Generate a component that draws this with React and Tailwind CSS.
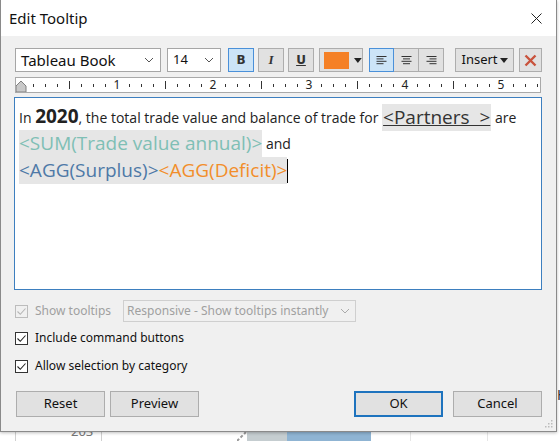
import React from "react";

const UI = { fontFamily: '"Noto Sans", "Open Sans", sans-serif' };
const TB = { fontFamily: '"Open Sans", "Noto Sans", sans-serif' };

function Chevron({ color = "#555" }) {
  return (
    <svg width="10" height="6" viewBox="0 0 10 6">
      <path d="M1 1 L5 5 L9 1" fill="none" stroke={color} strokeWidth="1" />
    </svg>
  );
}

function Check({ disabled }) {
  return (
    <div
      className={`w-[13px] h-[13px] border flex items-center justify-center ${
        disabled ? "border-[#bcbcbc] bg-[#f0f0f0]" : "border-[#333] bg-white"
      }`}
    >
      <svg width="11" height="11" viewBox="0 0 11 11">
        <path
          d="M1.5 5.5 L4.3 8.3 L9.5 2.5"
          fill="none"
          stroke={disabled ? "#b5b5b5" : "#222"}
          strokeWidth="1.1"
        />
      </svg>
    </div>
  );
}

function Ruler() {
  const ticks = [];
  const nums = [];
  for (let i = 1; i <= 43; i++) {
    const x = 5 + i * 12;
    if (i % 8 === 0) {
      nums.push(
        <span key={i} className="w-[24px] -ml-[12px] text-center" style={{ marginLeft: 0 }}>
          {i / 8}
        </span>
      );
      ticks.push(null);
    } else if (i % 4 === 0) {
      ticks.push(<line key={i} x1={x + 0.5} x2={x + 0.5} y1="3" y2="11" stroke="#333" strokeWidth="1" />);
    } else {
      ticks.push(<line key={i} x1={x + 0.5} x2={x + 0.5} y1="6" y2="9" stroke="#333" strokeWidth="1" />);
    }
  }
  return (
    <div className="ml-[1px] mt-[5px] w-[526px] h-[16px] bg-white border border-[#a9a9a9] flex">
      <svg width="524" height="14" viewBox="0 0 524 14" className="shrink-0">
        {ticks}
        <polygon points="5,3 10,8 10,14 0,14 0,8" fill="#c9c9c9" stroke="#808080" strokeWidth="1" />
      </svg>
      <div className="-ml-[524px] h-[14px] flex text-[12px] leading-[14px] text-[#222] pl-[89px] gap-[72px]">
        {nums}
      </div>
    </div>
  );
}

function TBtn({ children, selected, className = "" }) {
  return (
    <div
      className={`h-[24px] border flex items-center justify-center ${
        selected ? "bg-[#cce4f7] border-[#4a90d9]" : "bg-[#e1e1e1] border-[#adadad]"
      } ${className}`}
    >
      {children}
    </div>
  );
}

function AlignIcon({ kind }) {
  const rows = [10, 7, 10, 7];
  return (
    <svg width="11" height="9" viewBox="0 0 11 9">
      {rows.map((w, i) => {
        let x = 0.5;
        if (kind === "center") x = (11 - w) / 2;
        if (kind === "right") x = 11 - w - 0.5;
        return <line key={i} x1={x} x2={x + w} y1={i * 2.4 + 0.5} y2={i * 2.4 + 0.5} stroke="#333" strokeWidth="1" />;
      })}
    </svg>
  );
}

function Hl({ children, className = "" }) {
  return (
    <span className={`inline-block h-[27px] leading-[27px] bg-[#e6e6e6] text-[19px] align-bottom ${className}`}>
      {children}
    </span>
  );
}

function Btn({ children, primary, className = "" }) {
  return (
    <div
      className={`h-[26px] w-[89px] flex items-center justify-center text-[13px] text-[#111] bg-[#e1e1e1] ${
        primary ? "border-2 border-[#1e73be]" : "border border-[#adadad]"
      } ${className}`}
    >
      {children}
    </div>
  );
}

export default function App() {
  return (
    <div className="w-[560px] h-[441px] overflow-hidden bg-white flex flex-col" style={UI}>
      <div className="flex h-[432px]">
        <div className="relative z-10 w-[557px] h-[432px] flex flex-col border-l border-r border-b border-[#8a8a8a] shadow-[0_1px_3px_rgba(0,0,0,0.25)]">
          {/* Title bar */}
          <div className="h-[36px] bg-white flex items-center justify-between pl-[8px] pr-[14px]">
            <span className="text-[15px] text-[#111]">Edit Tooltip</span>
            <svg width="11" height="11" viewBox="0 0 11 11">
              <path d="M0.5 0.5 L10.5 10.5 M10.5 0.5 L0.5 10.5" stroke="#222" strokeWidth="1" />
            </svg>
          </div>
          {/* Body */}
          <div className="flex-1 bg-[#f0f0f0] pl-[13px] pt-[12px] flex flex-col">
            {/* Toolbar */}
            <div className="ml-[1px] h-[24px] flex items-center">
              <div className="w-[146px] h-[24px] bg-white border border-[#a6a6a6] flex items-center justify-between pl-[5px] pr-[6px]">
                <span className="text-[15px] text-[#111]">Tableau Book</span>
                <Chevron />
              </div>
              <div className="ml-[6px] w-[54px] h-[24px] bg-white border border-[#a6a6a6] flex items-center justify-between pl-[5px] pr-[6px]">
                <span className="text-[13px] text-[#111]">14</span>
                <Chevron />
              </div>
              <TBtn selected className="ml-[7px] w-[26px]">
                <span className="text-[12px] font-bold text-[#333]" style={{ fontFamily: '"DejaVu Sans", sans-serif' }}>B</span>
              </TBtn>
              <TBtn className="ml-[4px] w-[26px]">
                <span className="text-[13px] font-bold italic text-[#333]" style={{ fontFamily: '"Liberation Serif", serif' }}>I</span>
              </TBtn>
              <TBtn className="ml-[4px] w-[26px]">
                <span className="text-[12px] font-bold underline text-[#333]" style={{ fontFamily: '"DejaVu Sans", sans-serif' }}>U</span>
              </TBtn>
              <TBtn className="ml-[5px] w-[44px] justify-start pl-[4px]">
                <div className="w-[26px] h-[17px] bg-[#f58025]" />
                <svg width="8" height="5" viewBox="0 0 8 5" className="ml-[5px]">
                  <path d="M0 0 L8 0 L4 5 Z" fill="#222" />
                </svg>
              </TBtn>
              <div className="ml-[6px] flex">
                <TBtn selected className="w-[25px]"><AlignIcon kind="left" /></TBtn>
                <TBtn className="w-[25px] border-l-0"><AlignIcon kind="center" /></TBtn>
                <TBtn className="w-[25px] border-l-0"><AlignIcon kind="right" /></TBtn>
              </div>
              <TBtn className="ml-[11px] w-[59px]">
                <span className="text-[13px] text-[#111]">Insert</span>
                <svg width="8" height="5" viewBox="0 0 8 5" className="ml-[2px]">
                  <path d="M0 0 L8 0 L4 5 Z" fill="#222" />
                </svg>
              </TBtn>
              <TBtn className="ml-[5px] w-[23px]">
                <svg width="13" height="13" viewBox="0 0 13 13">
                  <path d="M1.5 1.5 L11.5 11.5 M11.5 1.5 L1.5 11.5" stroke="#c9533d" strokeWidth="2.4" />
                </svg>
              </TBtn>
            </div>
            <Ruler />
            {/* Text area */}
            <div className="mt-[4px] w-[528px] h-[193px] bg-white border border-[#3d7fbf] pl-[4px] pt-[5px] text-[14px] text-[#222] leading-[27px]" style={TB}>
              <div className="h-[27px] whitespace-nowrap">
                In <span className="text-[19px] font-bold">2020</span>, the total trade value and balance of trade for{" "}
                <Hl className="underline text-[#333] px-[1px]">{"<Partners\u00a0\u00a0>"}</Hl> are
              </div>
              <div className="h-[27px] whitespace-nowrap">
                <Hl className="text-[#7fbfb5]">{"<SUM(Trade value annual)>"}</Hl> and
              </div>
              <div className="h-[27px] whitespace-nowrap flex items-end">
                <Hl className="text-[#4e79a7]">{"<AGG(Surplus)>"}</Hl>
                <Hl className="text-[#f28e2b]">{"<AGG(Deficit)>"}</Hl>
                <span className="inline-block w-[1px] h-[24px] bg-black mb-[1px]" />
              </div>
            </div>
            {/* Show tooltips */}
            <div className="mt-[10px] ml-[1px] h-[22px] flex items-center">
              <Check disabled />
              <span className="ml-[7px] text-[12px] text-[#a0a0a0]">Show tooltips</span>
              <div className="ml-[12px] w-[233px] h-[22px] border border-[#cfcfcf] flex items-center justify-between pl-[3px] pr-[5px]">
                <span className="text-[12px] text-[#a0a0a0]">Responsive - Show tooltips instantly</span>
                <Chevron color="#aaa" />
              </div>
            </div>
            <div className="mt-[9px] ml-[1px] h-[14px] flex items-center">
              <Check />
              <span className="ml-[7px] text-[12px] text-[#111]">Include command buttons</span>
            </div>
            <div className="mt-[14px] ml-[1px] h-[14px] flex items-center">
              <Check />
              <span className="ml-[7px] text-[12px] text-[#111]">Allow selection by category</span>
            </div>
            {/* Buttons */}
            <div className="mt-[18px] ml-[2px] flex items-center">
              <Btn>Reset</Btn>
              <Btn className="ml-[5px]">Preview</Btn>
              <Btn primary className="ml-[155px]">OK</Btn>
              <Btn className="ml-[10px]">Cancel</Btn>
            </div>
            <div className="flex-1 flex justify-end items-end pr-[3px] pb-[3px]">
              <svg width="8" height="8" viewBox="0 0 8 8">
                <rect x="6" y="0" width="1.5" height="1.5" fill="#bbb" />
                <rect x="3" y="3" width="1.5" height="1.5" fill="#bbb" />
                <rect x="6" y="3" width="1.5" height="1.5" fill="#bbb" />
                <rect x="0" y="6" width="1.5" height="1.5" fill="#bbb" />
                <rect x="3" y="6" width="1.5" height="1.5" fill="#bbb" />
                <rect x="6" y="6" width="1.5" height="1.5" fill="#bbb" />
              </svg>
            </div>
          </div>
        </div>
        <div className="flex-1 overflow-hidden pt-[382px]">
          <span className="text-[14px] text-[#333]">H</span>
        </div>
      </div>
      {/* Background strip beneath dialog */}
      <div className="flex-1 flex items-start">
        <div className="ml-[15px] w-[1px] h-full bg-[#d0d0d0]" />
        <div className="ml-[55px] -mt-[7px] text-[13px] text-[#777] leading-none">203</div>
        <div className="ml-[8px] w-[1px] h-full bg-[#d0d0d0]" />
        <svg width="30" height="9" viewBox="0 0 30 9" className="ml-[135px]">
          <path d="M0 9 L9 0" stroke="#999" strokeWidth="2" strokeDasharray="3 2" />
        </svg>
        <div className="-ml-[20px] w-[40px] h-full bg-[#c5cdd0]" />
        <div className="w-[84px] h-full bg-[#8fb4d3]" />
        <div className="ml-[39px] w-[1px] h-full bg-[#e6e6e6]" />
        <div className="ml-[76px] w-[1px] h-full bg-[#e6e6e6]" />
      </div>
    </div>
  );
}
